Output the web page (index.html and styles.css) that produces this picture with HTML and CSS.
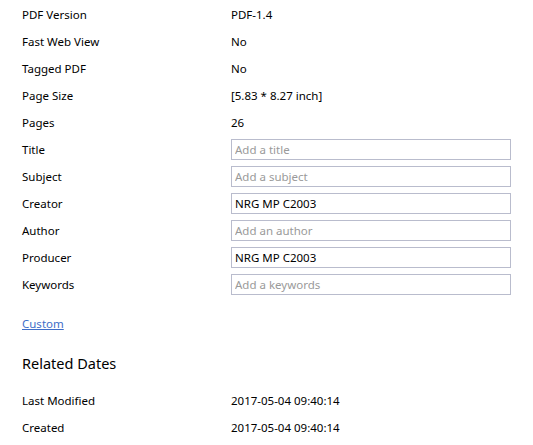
FILE: index.html
```html
<!DOCTYPE html>
<html>
<head>
<meta charset="utf-8">
<link rel="stylesheet" href="styles.css">
</head>
<body>
<div class="panel">
  <div class="grid">
    <div class="row"><span class="label">PDF Version</span><span class="value">PDF-1.4</span></div>
    <div class="row"><span class="label">Fast Web View</span><span class="value">No</span></div>
    <div class="row"><span class="label">Tagged PDF</span><span class="value">No</span></div>
    <div class="row"><span class="label">Page Size</span><span class="value">[5.83 * 8.27 inch]</span></div>
    <div class="row"><span class="label">Pages</span><span class="value">26</span></div>
    <div class="row"><span class="label">Title</span><input class="field" placeholder="Add a title"></div>
    <div class="row"><span class="label">Subject</span><input class="field" placeholder="Add a subject"></div>
    <div class="row"><span class="label">Creator</span><input class="field" value="NRG MP C2003"></div>
    <div class="row"><span class="label">Author</span><input class="field" placeholder="Add an author"></div>
    <div class="row"><span class="label">Producer</span><input class="field" value="NRG MP C2003"></div>
    <div class="row"><span class="label">Keywords</span><input class="field" placeholder="Add a keywords"></div>
  </div>
  <a class="link" href="#">Custom</a>
  <h2 class="heading">Related Dates</h2>
  <div class="grid">
    <div class="row"><span class="label">Last Modified</span><span class="value">2017-05-04 09:40:14</span></div>
    <div class="row"><span class="label">Created</span><span class="value">2017-05-04 09:40:14</span></div>
  </div>
</div>
</body>
</html>
```
FILE: styles.css
```css
html, body {
  margin: 0;
  padding: 0;
  background: #ffffff;
}
body {
  font-family: "Noto Sans", "Open Sans", sans-serif;
  font-size: 11.5px;
  color: #000000;
}
.panel {
  padding: 1px 0 0 22px;
  display: flex;
  flex-direction: column;
  align-items: flex-start;
}
.grid {
  display: flex;
  flex-direction: column;
}
.row {
  display: grid;
  grid-template-columns: 209px 280px;
  height: 27px;
  align-items: center;
}
.label, .value {
  line-height: 16px;
}
.field {
  box-sizing: border-box;
  width: 280px;
  height: 21px;
  margin: 0;
  padding: 0 0 0 3px;
  border: 1px solid #b9bccd;
  border-radius: 0;
  font-family: inherit;
  font-size: 11.5px;
  color: #000000;
  background: #ffffff;
  outline: none;
}
.field::placeholder {
  color: #9a9a9a;
}
.link {
  margin-top: 18px;
  color: #3e6ec8;
  text-decoration: underline;
  line-height: 16px;
}
.heading {
  margin: 21px 0 0 0;
  font-weight: normal;
  font-size: 14.5px;
  line-height: 20px;
  color: #000000;
}
.heading + .grid {
  margin-top: 14px;
}
```
